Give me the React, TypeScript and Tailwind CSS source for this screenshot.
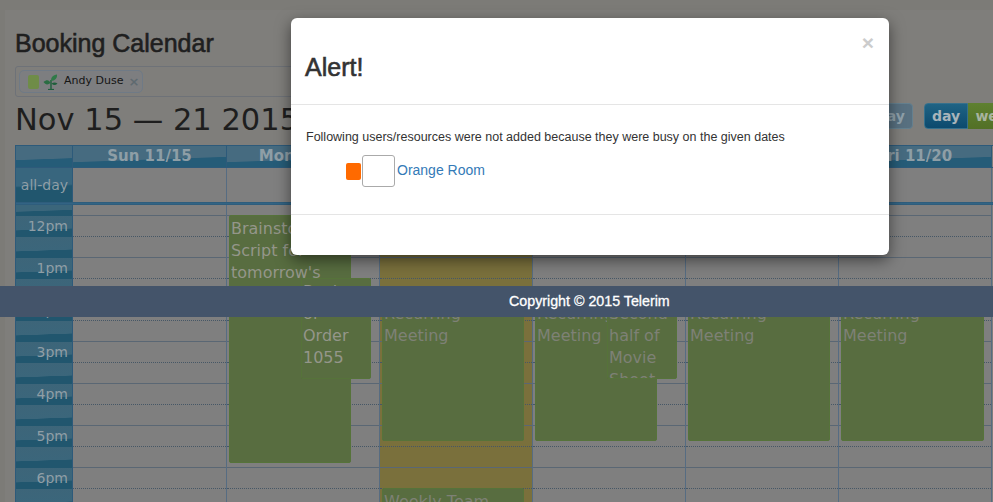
const VERDANA = "font-['DejaVu_Sans',sans-serif]";

type CalEvent = {
  left: number;
  width: number;
  top: number;
  height: number;
  lines: string[];
  bright?: boolean;
};

type Day = {
  label: string;
  width: string;
  today?: boolean;
  events: CalEvent[];
};

const DAYS: Day[] = [
  { label: "Sun 11/15", width: "w-[154px]", events: [] },
  {
    label: "Mon 11/16",
    width: "w-[153px]",
    events: [
      { left: 2, width: 122, top: 10, height: 248, lines: ["Brainstorming", "Script for", "tomorrow's", "meeting"], bright: true },
      { left: 74, width: 70, top: 73, height: 101, lines: ["Review", "of", "Order", "1055"], bright: true },
    ],
  },
  {
    label: "Tue 11/17",
    width: "w-[153px]",
    today: true,
    events: [
      { left: 2, width: 142, top: 95, height: 141, lines: ["Recurring", "Meeting"] },
      { left: 2, width: 142, top: 283, height: 60, lines: ["Weekly Team"] },
    ],
  },
  {
    label: "Wed 11/18",
    width: "w-[153px]",
    events: [
      { left: 2, width: 122, top: 95, height: 141, lines: ["Recurring", "Meeting"] },
      { left: 74, width: 70, top: 95, height: 79, lines: ["Second", "half of", "Movie", "Shoot"] },
    ],
  },
  {
    label: "Thu 11/19",
    width: "w-[153px]",
    events: [{ left: 2, width: 142, top: 95, height: 141, lines: ["Recurring", "Meeting"] }],
  },
  {
    label: "Fri 11/20",
    width: "w-[153px]",
    events: [{ left: 2, width: 143, top: 95, height: 141, lines: ["Recurring", "Meeting"] }],
  },
];

const HOURS = ["12pm", "", "1pm", "", "2pm", "", "3pm", "", "4pm", "", "5pm", "", "6pm", ""];

const gloss =
  "bg-[linear-gradient(178deg,#3d6579_0%,#3b667b_62%,#21566e_64%,#21566e_100%)]";

function PlantIcon() {
  return (
    <svg viewBox="0 0 16 16" className="h-[16px] w-[16px]">
      <path d="M8 15V6" stroke="#1f5f3c" strokeWidth="1.4" fill="none" />
      <path d="M5 15.500h6" stroke="#1f5f3c" strokeWidth="1.2" fill="none" />
      <path d="M8 7C8 3 10 1 14 .5c.5 3.500-2 6.500-6 6.500Z" fill="#2f7a48" />
      <path d="M7.500 9C6 5.500 3.500 5.500 .5 8c2 3 4.500 3 7 1Z" fill="#2a6d42" />
      <path d="M8.500 9.500c2-1.500 4-1.500 6 0-2 2-4 2-6 0Z" fill="#1f5f3c" />
    </svg>
  );
}

function DayColumn({ day }: { day: Day }) {
  return (
    <div
      className={`relative shrink-0 border-r border-[#566c82] ${day.width} ${
        day.today ? "bg-[#7a703c]" : "bg-[#7f7f7f]"
      }`}
    >
      <div className="h-[11px] border-b border-[#5a6774]" />
      {HOURS.map((_, i) => (
        <div
          key={i}
          className={`h-[21px] border-b ${i % 2 === 0 ? "border-dotted border-[#465766]" : "border-solid border-[#5a6774]"}`}
        />
      ))}
      {day.events.map((ev, i) => (
        <div
          key={i}
          className={`absolute overflow-hidden rounded-[2px] border border-[#56733a] bg-[#586d40] px-px pt-[2px] text-[16px] leading-[22px] ${VERDANA} ${
            ev.bright ? "text-[#94968a]" : "text-[#7e8176]"
          }`}
          style={{ left: ev.left, width: ev.width, top: ev.top, height: ev.height }}
        >
          {ev.lines.map((line) => (
            <div key={line} className="whitespace-nowrap">
              {line}
            </div>
          ))}
        </div>
      ))}
    </div>
  );
}

export default function App() {
  return (
    <div className="relative h-[502px] w-[993px] overflow-hidden bg-[#7c7b77]">
      <div className="ml-[5px] mt-[10px] h-[492px] w-[1200px] bg-[#7f7e7b] pl-[10px] pt-[19px]">
        <h2 className="h-[28px] font-['Liberation_Sans',sans-serif] text-[25px] leading-[28px] text-[#1f1f1f] [-webkit-text-stroke:0.6px_#1f1f1f]">
          Booking Calendar
        </h2>

        <div className="mt-[9px] flex h-[31px] w-[400px] items-center rounded-[3px] border border-[#6e7278] pl-[3px]">
          <div className={`flex h-[23px] w-[124px] items-center rounded-[5px] border border-[#6f7a86] bg-[#7d7e80] pl-[8px] text-[11px] text-[#151515] ${VERDANA}`}>
            <span className="h-[14px] w-[11px] rounded-[2px] bg-[#6f8c48]" />
            <span className="ml-[4px]">
              <PlantIcon />
            </span>
            <span className="ml-[5px]">Andy Duse</span>
            <span className="ml-[5px] text-[13px] font-bold leading-none text-[#5f6a70]">×</span>
          </div>
        </div>

        <div className="mt-[4px] flex h-[36px] items-start">
          <div className={`w-[828px] pt-px text-[30.5px] leading-[36px] text-[#1e1e1e] ${VERDANA}`}>
            Nov 15 — 21 2015
          </div>
          <div className={`mt-[2px] flex h-[26px] w-[70px] items-center justify-end rounded-[4px] border border-[#64808f] bg-[#587080] pr-[7px] text-[14px] font-bold text-[#8fa0aa] ${VERDANA}`}>
            today
          </div>
          <div className="ml-[11px] mt-[2px] flex h-[26px]">
            <div className={`flex w-[44px] items-center justify-center rounded-l-[4px] border border-[#35708c] bg-[linear-gradient(#1f6384,#0c4a6e)] text-[14px] font-bold text-[#a8b4ba] ${VERDANA}`}>
              day
            </div>
            <div className={`flex w-[56px] items-center justify-center bg-[linear-gradient(#5e8030,#527026)] text-[14px] font-bold text-[#a8b4a0] ${VERDANA}`}>
              week
            </div>
          </div>
        </div>

        <div className="mt-[8px] w-fit border-l border-t border-[#2d5a7a]">
          {/* header row */}
          <div className={`flex h-[21px] text-[15px] font-bold text-[#8e9ea6] ${VERDANA}`}>
            <div className="w-[57px] shrink-0 border-r border-[#2d5a7a] bg-[linear-gradient(178deg,#466b80_60%,#255c78_63%)]" />
            {DAYS.map((day) => (
              <div
                key={day.label}
                className={`flex shrink-0 items-center justify-center border-r border-[#2d5a7a] bg-[linear-gradient(178deg,#466b80_60%,#255c78_63%)] leading-none ${day.width}`}
              >
                {day.label}
              </div>
            ))}
          </div>

          {/* all-day row */}
          <div className="flex h-[35px] border-t border-[#2d5a7a]">
            <div className={`flex w-[57px] shrink-0 items-center justify-end border-r border-[#2d5a7a] bg-[linear-gradient(178deg,#38667e_50%,#21566e_55%)] pr-[4px] text-[14px] text-[#8f9ea6] ${VERDANA}`}>
              all-day
            </div>
            {DAYS.map((day) => (
              <div key={day.label} className={`shrink-0 border-r border-[#566c82] bg-[#7f7f7f] ${day.width}`} />
            ))}
          </div>
          <div className="h-[3px] w-[1130px] border-y border-[#2f5d7c] bg-[#326484]" />

          {/* time grid */}
          <div className="flex">
            <div className={`w-[57px] shrink-0 border-r border-[#2d5a7a] text-right text-[14px] leading-[21px] text-[#8f9ea6] ${VERDANA}`}>
              <div className="h-[11px] bg-[linear-gradient(178deg,#3b667b_50%,#21566e_55%)]" />
              {HOURS.map((hour, i) => (
                <div key={i} className={`h-[21px] pr-[4px] ${gloss}`}>
                  {hour}
                </div>
              ))}
            </div>
            {DAYS.map((day) => (
              <DayColumn key={day.label} day={day} />
            ))}
          </div>
        </div>
      </div>

      {/* footer bar sits over the dimmed page */}
      <div className="absolute left-0 top-[286px] flex h-[31px] w-full items-center bg-[#44546a] pl-[509px] pt-px font-['Liberation_Sans',sans-serif] text-[14.25px] text-white [-webkit-text-stroke:0.3px_#ffffff]">
        Copyright © 2015 Telerim
      </div>

      {/* alert modal */}
      <div className="absolute left-[291px] top-[18px] h-[237px] w-[598px] rounded-[6px] bg-white font-['Liberation_Sans',sans-serif] text-[#333333] shadow-[0_5px_15px_rgba(0,0,0,0.5)]">
        <div className="relative h-[87px] border-b border-[#e5e5e5] pl-[14px] pt-[34px]">
          <span className="absolute right-[15px] top-[14px] text-[21px] font-bold leading-[21px] text-[#cccccc]">×</span>
          <h4 className="text-[25px] leading-[30px] text-[#333333] [-webkit-text-stroke:0.6px_#333333]">Alert!</h4>
        </div>
        <div className="h-[110px] border-b border-[#e5e5e5] pl-[15px] pt-[23px]">
          <p className="text-[12.5px] leading-[18px]">
            Following users/resources were not added because they were busy on the given dates
          </p>
          <div className="ml-[40px] mt-[9px] flex items-center">
            <span className="mt-px h-[17px] w-[15px] rounded-[2px] bg-[#ff6a00]" />
            <span className="ml-px h-[32px] w-[33px] rounded-[3px] border border-[#aaaaaa] bg-white" />
            <a className="ml-[2px] -translate-y-px text-[14px] text-[#337ab7]">Orange Room</a>
          </div>
        </div>
      </div>
    </div>
  );
}
